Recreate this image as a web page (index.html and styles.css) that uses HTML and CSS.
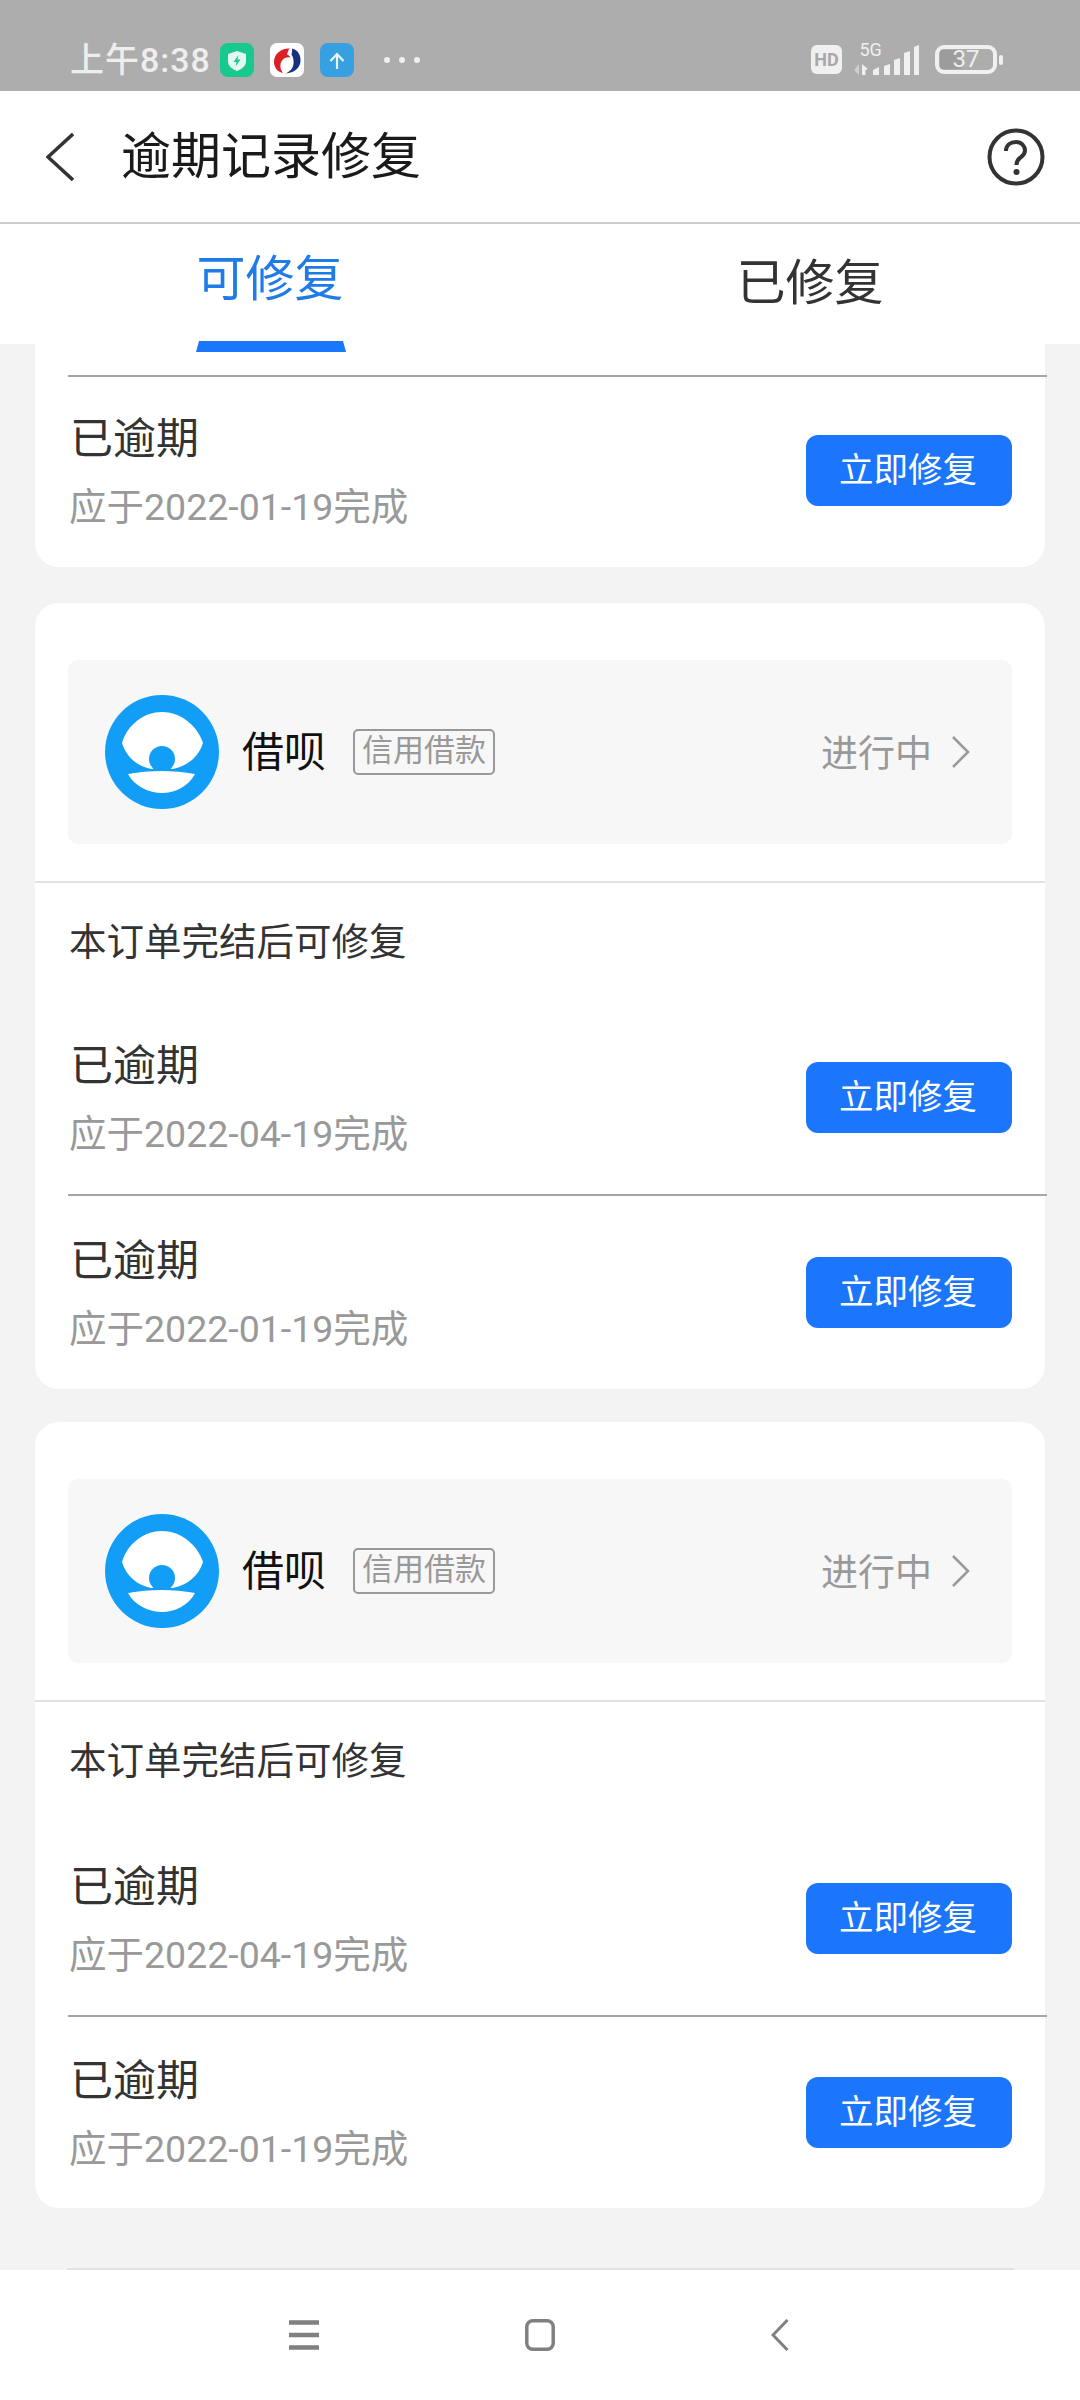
FILE: index.html
```html
<!DOCTYPE html>
<html lang="zh-CN">
<head>
    <meta charset="UTF-8">
    <meta name="viewport" content="width=device-width, initial-scale=1.0">
    <title>逾期记录修复</title>
    <link rel="stylesheet" href="styles.css">
</head>
<body>
    <div class="page">
        <div class="status-bar">
            <div class="status-left">
                <span class="time">上午8:38</span>
                <svg class="app-icon icon-shield" viewBox="0 0 34 34"><rect width="34" height="34" rx="8" fill="#17c98f"/><path d="M17 8l9 3v7c0 5-4 8-9 10-5-2-9-5-9-10v-7z" fill="#e4f8f1"/><path d="M18.500 12l-5 7h3l-1 4.500 5-7h-3z" fill="#17c98f"/></svg>
                <svg class="app-icon icon-swirl" viewBox="0 0 34 34"><rect width="34" height="34" rx="7" fill="#fff"/><path d="M20 5.500C11 5 4 11 4 19c0 6 4 10 9 11-3-4-3.500-9-1-12.500 2-3 6-4 8.500-3-.5-1.500-2-2.500-3.500-3 .5-2 1.500-4 2.500-6.500z" fill="#dd2026"/><path d="M22 5.500C28 7 31 12 30.500 18.500 30 25 24 30 15.500 30.500 20 28.500 23 25.500 23.500 21 23.800 18 23.500 14.500 21.500 11.500 22 9.500 22.300 7.500 22 5.500z" fill="#14307f"/></svg>
                <svg class="app-icon icon-upload" viewBox="0 0 34 34"><rect width="34" height="34" rx="8" fill="#37a0e0"/><path d="M17 26V12M10.500 18L17 11l6.500 7" fill="none" stroke="#eaf6fd" stroke-width="2.200"/></svg>
                <span class="dots"><i></i><i></i><i></i></span>
            </div>
            <div class="status-right">
                <span class="hd">HD</span>
                <svg class="signal" width="66" height="36" viewBox="0 -6 66 36">
                    <text class="signal-label" x="5.500" y="11">5G</text>
                    <path d="M5 19v11l-5-5z" fill="#cfcfcf"/>
                    <path d="M8 19l6 5-2.500 1v5H8z" fill="#f0f0f0"/>
                    <path d="M19 25l6-3v8h-6zM30 21l6-2v11h-6zM40 15l6-2v17h-6zM50 8l6-2v24h-6zM60 2l5-2v30h-5z" fill="#f0f0f0"/>
                </svg>
                <div class="battery">
                    <div class="battery-body">
                        <div class="battery-level"></div>
                        <span class="battery-num">37</span>
                    </div>
                    <div class="battery-tip"></div>
                </div>
            </div>
        </div>

        <div class="header">
            <svg class="back" width="28" height="48" viewBox="0 0 28 48"><path d="M27 1L2 24l25 23" fill="none" stroke="#333" stroke-width="3.500"/></svg>
            <div class="title">逾期记录修复</div>
            <svg class="help" width="58" height="58" viewBox="0 0 58 58">
                <circle cx="29" cy="29" r="26.500" fill="none" stroke="#333" stroke-width="4"/>
                <path d="M19 23c0-6 4.500-9 10-9s9 4 9 8.500c0 4-2.500 5.500-5 7.500-2.500 1.700-3.500 3-3.500 7" fill="none" stroke="#333" stroke-width="4"/>
                <circle cx="29.500" cy="44" r="3" fill="#333"/>
            </svg>
        </div>

        <div class="tabs">
            <div class="tab tab-active">可修复</div>
            <div class="tab">已修复</div>
        </div>

        <div class="list">
            <div class="card card-cut">
                <div class="row">
                    <div class="row-text">
                        <div class="row-title">已逾期</div>
                        <div class="row-date">应于2022-01-19完成</div>
                    </div>
                    <div class="fix-btn">立即修复</div>
                </div>
            </div>

            <div class="card">
                <div class="order-box">
                    <svg class="logo" width="114" height="114" viewBox="0 0 114 114">
                        <circle cx="57" cy="57" r="57" fill="#129ef7"/>
                        <path d="M17 48C22 30 39 17 57 17s35 13 41 31c-4 13-15 23-30 26H46C31 71 21 61 17 48z" fill="#fff"/>
                        <circle cx="57" cy="64" r="13" fill="#129ef7"/>
                        <path d="M23 79c22-4 45-4 67 0-6 12-20 19-33 19S29 91 23 79z" fill="#fff"/>
                    </svg>
                    <span class="order-name">借呗</span>
                    <span class="order-tag">信用借款</span>
                    <span class="order-status">进行中</span>
                    <svg class="arrow" width="18" height="32" viewBox="0 0 18 32"><path d="M1 1l15 15L1 31" fill="none" stroke="#999" stroke-width="2.500"/></svg>
                </div>
                <div class="order-note">本订单完结后可修复</div>
                <div class="row">
                    <div class="row-text">
                        <div class="row-title">已逾期</div>
                        <div class="row-date">应于2022-04-19完成</div>
                    </div>
                    <div class="fix-btn">立即修复</div>
                </div>
                <div class="row">
                    <div class="row-text">
                        <div class="row-title">已逾期</div>
                        <div class="row-date">应于2022-01-19完成</div>
                    </div>
                    <div class="fix-btn">立即修复</div>
                </div>
            </div>

            <div class="card card-last">
                <div class="order-box">
                    <svg class="logo" width="114" height="114" viewBox="0 0 114 114">
                        <circle cx="57" cy="57" r="57" fill="#129ef7"/>
                        <path d="M17 48C22 30 39 17 57 17s35 13 41 31c-4 13-15 23-30 26H46C31 71 21 61 17 48z" fill="#fff"/>
                        <circle cx="57" cy="64" r="13" fill="#129ef7"/>
                        <path d="M23 79c22-4 45-4 67 0-6 12-20 19-33 19S29 91 23 79z" fill="#fff"/>
                    </svg>
                    <span class="order-name">借呗</span>
                    <span class="order-tag">信用借款</span>
                    <span class="order-status">进行中</span>
                    <svg class="arrow" width="18" height="32" viewBox="0 0 18 32"><path d="M1 1l15 15L1 31" fill="none" stroke="#999" stroke-width="2.500"/></svg>
                </div>
                <div class="order-note">本订单完结后可修复</div>
                <div class="row">
                    <div class="row-text">
                        <div class="row-title">已逾期</div>
                        <div class="row-date">应于2022-04-19完成</div>
                    </div>
                    <div class="fix-btn">立即修复</div>
                </div>
                <div class="row">
                    <div class="row-text">
                        <div class="row-title">已逾期</div>
                        <div class="row-date">应于2022-01-19完成</div>
                    </div>
                    <div class="fix-btn">立即修复</div>
                </div>
            </div>
        </div>

        <div class="nav-line"></div>
        <div class="nav">
            <svg width="30" height="30" viewBox="0 0 30 30"><path d="M0 2.500h30M0 15h30M0 27.500h30" stroke="#808080" stroke-width="4.500"/></svg>
            <svg class="nav-home" width="30" height="32" viewBox="0 0 30 32"><rect x="1.800" y="1.800" width="26.400" height="28.400" rx="6" fill="none" stroke="#808080" stroke-width="3.500"/></svg>
            <svg width="18" height="32" viewBox="0 0 18 32"><path d="M16.500 1L2 16l14.500 15" fill="none" stroke="#808080" stroke-width="3"/></svg>
        </div>
    </div>
</body>
</html>
```

FILE: styles.css
```css
* {
    box-sizing: border-box;
}
body {
    margin: 0;
    font-family: Roboto, "Noto Sans CJK SC", sans-serif;
    background-color: #f3f3f3;
}
.page {
    width: 1080px;
    height: 2400px;
    display: flex;
    flex-direction: column;
    overflow: hidden;
}

/* status bar */
.status-bar {
    height: 91px;
    padding: 28px 77px 0 70px;
    background: #adadad;
    display: flex;
    align-items: center;
    justify-content: space-between;
    flex-shrink: 0;
}
.status-left,
.status-right {
    display: flex;
    align-items: center;
}
.time {
    font-size: 34px;
    line-height: 40px;
    font-weight: 500;
    letter-spacing: 1px;
    color: #eee;
    margin-right: 9px;
}
.app-icon {
    width: 34px;
    height: 34px;
    margin-right: 16px;
}
.dots {
    display: flex;
    gap: 9px;
    margin-left: 14px;
}
.dots i {
    width: 6px;
    height: 6px;
    border-radius: 50%;
    background: #f0f0f0;
}
.hd {
    width: 31px;
    height: 29px;
    border-radius: 6px;
    background: #f0f0f0;
    color: #a8a8a8;
    font-size: 18px;
    font-weight: 700;
    line-height: 29px;
    text-align: center;
    margin-right: 12px;
}
.signal {
    margin: -6px 15px 0 0;
}
.signal-label {
    font-family: Roboto, sans-serif;
    font-size: 18px;
    fill: #f0f0f0;
}
.battery {
    display: flex;
    align-items: center;
}
.battery-body {
    position: relative;
    width: 62px;
    height: 29px;
    border: 4px solid #f0f0f0;
    border-radius: 9px;
    display: flex;
    align-items: center;
    justify-content: center;
}
.battery-level {
    position: absolute;
    left: 1px;
    top: 1px;
    bottom: 1px;
    width: 22px;
    border-radius: 2px;
    background: #9c9c9c;
}
.battery-num {
    position: relative;
    font-size: 24px;
    line-height: 21px;
    color: #eee;
}
.battery-tip {
    width: 4px;
    height: 10px;
    margin-left: 2px;
    border-radius: 2px;
    background: #f0f0f0;
}

/* title bar */
.header {
    height: 133px;
    padding: 0 35px 0 46px;
    background: white;
    border-bottom: 2px solid #ccc;
    display: flex;
    align-items: center;
    flex-shrink: 0;
}
.title {
    margin-left: 47px;
    padding-bottom: 9px;
    font-size: 50px;
    color: #1a1a1a;
}
.help {
    margin-left: auto;
}

/* tabs */
.tabs {
    position: relative;
    z-index: 1;
    height: 120px;
    background: white;
    display: flex;
    flex-shrink: 0;
}
.tab {
    flex: 1;
    padding-top: 30px;
    font-size: 49px;
    line-height: 60px;
    color: #333;
    text-align: center;
}
.tab-active {
    position: relative;
    padding-top: 26px;
    color: #1e7be8;
}
.tab-active::after {
    content: "";
    position: absolute;
    left: 196px;
    bottom: -8px;
    width: 150px;
    height: 11px;
    background: #1a76fb;
    clip-path: polygon(2% 0, 98% 0, 100% 100%, 0 100%);
}

/* list */
.list {
    flex: 1;
    min-height: 0;
    padding: 0 35px;
    display: flex;
    flex-direction: column;
    gap: 35px;
    overflow: hidden;
}
.card {
    background: white;
    border-radius: 24px;
    flex-shrink: 0;
}
.card-cut {
    margin-bottom: 1px;
    padding-top: 31px;
    border-radius: 0 0 24px 24px;
}
.card-cut .row {
    height: 192px;
    padding-bottom: 3px;
}
.card-last {
    margin-top: -2px;
}
.card-last .order-note {
    height: 122px;
}
.card-last .row + .row {
    height: 193px;
}
.order-box {
    height: 184px;
    margin: 57px 33px 37px;
    padding: 0 42px 0 37px;
    background: #f7f7f7;
    border-radius: 10px;
    display: flex;
    align-items: center;
}
.order-name {
    margin-left: 23px;
    padding-bottom: 7px;
    font-size: 42px;
    color: #111;
}
.order-tag {
    width: 142px;
    height: 46px;
    margin-left: 27px;
    border: 2.5px solid #999;
    border-radius: 5px;
    font-size: 31px;
    line-height: 40px;
    color: #999;
    text-align: center;
}
.order-status {
    margin-left: auto;
    padding-bottom: 3px;
    font-size: 37px;
    color: #999;
}
.arrow {
    margin-left: 20px;
}
.order-note {
    height: 120px;
    padding-left: 34px;
    border-top: 2px solid #e2e2e2;
    font-size: 37.5px;
    line-height: 118px;
    color: #333;
}
.row {
    height: 193px;
    margin: 0 -2px 0 33px;
    padding: 0 35px 0 2px;
    display: flex;
    align-items: center;
    justify-content: space-between;
}
.row + .row {
    height: 195px;
}
.row + .row,
.card-cut .row {
    border-top: 2px solid #a6a6a6;
}
.row-title {
    font-size: 43px;
    line-height: 60px;
    color: #333;
}
.row-date {
    margin-top: 13px;
    margin-left: -1px;
    font-size: 37.5px;
    line-height: 50px;
    color: #999;
}
.fix-btn {
    width: 206px;
    height: 71px;
    padding-right: 2px;
    background: #1b76fb;
    border-radius: 12px;
    font-size: 34.5px;
    line-height: 71px;
    color: white;
    text-align: center;
}

/* bottom nav */
.nav-line {
    height: 2px;
    margin: 0 66px 0 67px;
    background: #e2e2e2;
    flex-shrink: 0;
}
.nav {
    height: 130px;
    padding-left: 289px;
    background: white;
    display: flex;
    align-items: center;
    flex-shrink: 0;
}
.nav-home {
    margin: 0 216px 0 206px;
}
```
